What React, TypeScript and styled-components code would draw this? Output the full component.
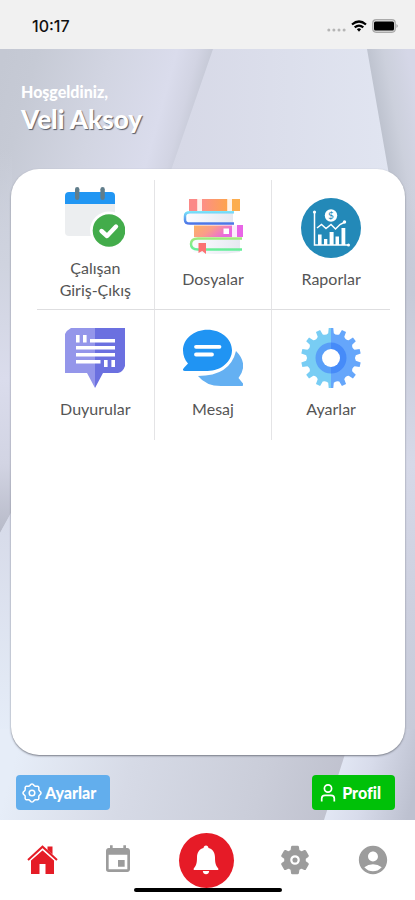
import React from "react";
import styled, { createGlobalStyle } from "styled-components";
import { MdAccountCircle, MdEvent } from "react-icons/md";

const GlobalStyle = createGlobalStyle`
  *, *::before, *::after { box-sizing: border-box; }
  body { margin: 0; font-family: Lato, "Open Sans", sans-serif; }
  button { font-family: inherit; border: 0; padding: 0; cursor: pointer; }
  svg { display: block; }
`;

const Screen = styled.div`
  display: flex;
  flex-direction: column;
  min-height: 100vh;
  background: #fff;
`;

const StatusBar = styled.header`
  display: flex;
  align-items: center;
  justify-content: space-between;
  height: 49px;
  padding: 2px 17px 0 32px;
  background: #f1f1f1;
`;

const Clock = styled.time`
  font: 500 16px/20px Inter, sans-serif;
  color: #111;
`;

const StatusIcons = styled.div`
  display: flex;
  align-items: center;
  gap: 5px;
`;

const Main = styled.main`
  position: relative;
  isolation: isolate;
  flex: 1;
  display: flex;
  flex-direction: column;
  padding: 32px 10px 10px 11px;
`;

const Backdrop = styled.svg`
  position: absolute;
  inset: 0;
  z-index: -1;
  width: 100%;
  height: 100%;
`;

const Greeting = styled.div`
  padding: 0 10px;
  margin-bottom: 34px;
  color: #fff;
`;

const Welcome = styled.p`
  margin: 0;
  font-size: 16px;
  line-height: 22px;
  font-weight: 900;
`;

const UserName = styled.h1`
  margin: 0;
  font-size: 26px;
  line-height: 32px;
  font-weight: 900;
  text-shadow: 1px 1px 1px #555a66;
`;

const Card = styled.section`
  flex: 1;
  padding: 11px 15px 24px 26px;
  background: #fff;
  border-radius: 28px;
  box-shadow: 0 1px 2px #777b86;
`;

const MenuGrid = styled.div`
  display: grid;
  grid-template-columns: repeat(3, 1fr);
  grid-auto-rows: 130px;
`;

const MenuItem = styled.button<{ $right?: boolean; $bottom?: boolean }>`
  display: flex;
  flex-direction: column;
  align-items: center;
  justify-content: center;
  gap: 10px;
  padding-bottom: 2px;
  background: none;
  border-right: ${(p) => (p.$right ? "1px solid #e4e4e6" : "0")};
  border-bottom: ${(p) => (p.$bottom ? "1px solid #dedee0" : "0")};
  color: #555;
  font-size: 16px;
  line-height: 22px;
`;

const MenuLabel = styled.span`
  max-width: 88px;
`;

const Actions = styled.div`
  display: flex;
  justify-content: space-between;
  margin-top: 20px;
  padding: 0 10px 0 5px;
`;

const ActionButton = styled.button<{ $color: string; $gap: number }>`
  display: flex;
  align-items: center;
  gap: ${(p) => p.$gap}px;
  height: 35px;
  padding: 0 14px 0 6px;
  border-radius: 4px;
  background: ${(p) => p.$color};
  color: #fff;
  font-size: 16px;
  line-height: 20px;
  font-weight: 900;
`;

const TabBar = styled.nav`
  position: relative;
  display: flex;
  align-items: center;
  justify-content: space-between;
  height: 80px;
  padding: 0 25px 0 27px;
  background: #fff;
`;

const TabButton = styled.button<{ $active?: boolean }>`
  display: flex;
  background: none;
  color: ${(p) => (p.$active ? "#e51c26" : "#9c9c9c")};
`;

const BellButton = styled.button`
  display: flex;
  align-items: center;
  justify-content: center;
  width: 55px;
  height: 55px;
  border-radius: 50%;
  background: #e61b27;
  color: #fff;
`;

const HomeIndicator = styled.div`
  position: absolute;
  left: 50%;
  bottom: 8px;
  width: 148px;
  height: 4px;
  border-radius: 2px;
  background: #000;
  transform: translateX(-50%);
`;

function polar(c: number, r: number, degrees: number) {
  const a = (degrees * Math.PI) / 180;
  return `${(c + r * Math.sin(a)).toFixed(2)} ${(c - r * Math.cos(a)).toFixed(2)}`;
}

function gearPath(c: number, outer: number, root: number, teeth: number) {
  const step = 360 / teeth;
  let d = "";
  for (let i = 0; i < teeth; i++) {
    const a = i * step;
    d += `${i ? "L" : "M"}${polar(c, root, a - step * 0.25)}L${polar(c, outer, a - step * 0.17)}`;
    d += `L${polar(c, outer, a + step * 0.17)}L${polar(c, root, a + step * 0.25)}`;
    d += `Q${polar(c, root - 2, a + step * 0.5)} ${polar(c, root, a + step * 0.75)}`;
  }
  return d + "Z";
}

function scallopPath(c: number, outer: number, inner: number, lobes: number) {
  const points = 96;
  let d = "";
  for (let i = 0; i < points; i++) {
    const a = (i * 360) / points;
    const wave = (1 + Math.cos((a * lobes * Math.PI) / 180)) / 2;
    d += `${i ? "L" : "M"}${polar(c, inner + (outer - inner) * wave, a)}`;
  }
  return d + "Z";
}

const BackdropArt = () => (
  <Backdrop viewBox="0 0 415 771" preserveAspectRatio="none" aria-hidden="true">
    <defs>
      <linearGradient id="leftPanel" gradientUnits="userSpaceOnUse" x1="0" y1="20" x2="200" y2="75">
        <stop offset="0" stopColor="#c4c8d3" />
        <stop offset="0.15" stopColor="#c6cad5" />
        <stop offset="0.5" stopColor="#d2d5e2" />
        <stop offset="0.8" stopColor="#dadcec" />
        <stop offset="0.9" stopColor="#d2d4e3" />
        <stop offset="1" stopColor="#c0c4d0" />
      </linearGradient>
      <linearGradient id="middlePanel" gradientUnits="userSpaceOnUse" x1="168" y1="0" x2="392" y2="0">
        <stop offset="0" stopColor="#d6d8e6" />
        <stop offset="1" stopColor="#e1e5f1" />
      </linearGradient>
      <linearGradient id="rightPanel" gradientUnits="userSpaceOnUse" x1="373" y1="50" x2="415" y2="42">
        <stop offset="0" stopColor="#bcc1cd" />
        <stop offset="0.45" stopColor="#ccd0dc" />
        <stop offset="1" stopColor="#d5d7e7" />
      </linearGradient>
      <linearGradient id="leftFade" x1="0" y1="0" x2="0" y2="1">
        <stop offset="0" stopColor="#cfd3df" stopOpacity="0" />
        <stop offset="0.3" stopColor="#cfd3df" />
        <stop offset="0.6" stopColor="#dadcec" />
        <stop offset="0.82" stopColor="#d2d4e3" />
        <stop offset="1" stopColor="#b7bac8" />
      </linearGradient>
      <linearGradient id="lowerLeft" x1="0" y1="0" x2="0" y2="1">
        <stop offset="0" stopColor="#d4d7e6" />
        <stop offset="1" stopColor="#e6eef9" />
      </linearGradient>
      <linearGradient id="floor" gradientUnits="userSpaceOnUse" x1="20" y1="690" x2="335" y2="775">
        <stop offset="0" stopColor="#e6edf8" />
        <stop offset="0.35" stopColor="#d6dae6" />
        <stop offset="0.75" stopColor="#cacdd9" />
        <stop offset="1" stopColor="#bfc1ce" />
      </linearGradient>
      <linearGradient id="floorRight" gradientUnits="userSpaceOnUse" x1="335" y1="720" x2="415" y2="740">
        <stop offset="0" stopColor="#e3e8f5" />
        <stop offset="0.4" stopColor="#d8dceb" />
        <stop offset="1" stopColor="#bdc1d0" />
      </linearGradient>
      <linearGradient id="rightFade" x1="0" y1="0" x2="0" y2="1">
        <stop offset="0" stopColor="#d0d3e2" stopOpacity="0" />
        <stop offset="0.2" stopColor="#c6cad8" />
        <stop offset="0.5" stopColor="#d6d9e8" />
        <stop offset="0.75" stopColor="#cdd0df" />
        <stop offset="1" stopColor="#c6cad8" />
      </linearGradient>
    </defs>
    <rect width="415" height="771" fill="url(#middlePanel)" />
    <path d="M0 0H213L168 130L60 450H0Z" fill="url(#leftPanel)" />
    <path d="M367 0H415V700H395V160Z" fill="url(#rightPanel)" />
    <path d="M0 100H12V462L0 484Z" fill="url(#leftFade)" />
    <path d="M0 484L30 430V700H0Z" fill="url(#lowerLeft)" />
    <path d="M395 130H415V700H395Z" fill="url(#rightFade)" />
    <path d="M0 680H355L325 771H0Z" fill="url(#floor)" />
    <path d="M353 680H415V771H324Z" fill="url(#floorRight)" />
  </Backdrop>
);

const SignalIcons = () => (
  <StatusIcons aria-hidden="true">
    <svg width="19" height="16" viewBox="0 0 19 16" fill="#b5b5b5">
      <circle cx="1.8" cy="12" r="1.5" />
      <circle cx="6.9" cy="12" r="1.5" />
      <circle cx="12" cy="12" r="1.5" />
      <circle cx="17.1" cy="12" r="1.5" />
    </svg>
    <svg width="16" height="12" viewBox="0 0 16 12" fill="none" stroke="#000" strokeWidth="2.2">
      <path d="M1 4.5Q8-1.5 15 4.5" />
      <path d="M3.7 7.4Q8 3.7 12.3 7.4" />
      <path d="M5.9 9.2Q8 7.5 10.1 9.2L8 11.7Z" fill="#000" stroke="none" />
    </svg>
    <svg width="26" height="14" viewBox="0 0 26 14">
      <rect x="0.7" y="0.7" width="22.6" height="12.6" rx="3.5" fill="#ddd" stroke="#aaa" strokeWidth="1.2" />
      <rect x="2" y="2.5" width="20" height="9" rx="1.5" fill="#000" />
      <path d="M24.5 5Q27 7 24.5 9Z" fill="#999" />
    </svg>
  </StatusIcons>
);

const CalendarIcon = () => (
  <svg width="60" height="60" viewBox="0 0 60 60" aria-hidden="true">
    <path d="M0 16H50V45Q50 49 46 49H4Q0 49 0 45Z" fill="#eceef0" />
    <path d="M0 17V9Q0 5 4 5H46Q50 5 50 9V17Z" fill="#2196f3" />
    <rect x="10" y="0" width="4.4" height="13" rx="2.2" fill="#607d8b" />
    <rect x="35.4" y="0" width="4.4" height="13" rx="2.2" fill="#607d8b" />
    <circle cx="44" cy="43.5" r="19" fill="#fff" />
    <circle cx="44" cy="43.5" r="16.3" fill="#43ac4b" />
    <path d="M36.5 44L42 49L51 39.5" fill="none" stroke="#fff" strokeWidth="4.4" strokeLinecap="round" strokeLinejoin="round" />
  </svg>
);

const BooksIcon = () => (
  <svg width="60" height="60" viewBox="0 0 60 60" aria-hidden="true">
    <defs>
      <linearGradient id="spine"><stop stopColor="#fc8f88" /><stop offset="1" stopColor="#fda34d" /></linearGradient>
      <linearGradient id="spineLow" x2="1" y2="0.4"><stop stopColor="#fcb265" /><stop offset="0.5" stopColor="#fa9c8a" /><stop offset="1" stopColor="#e968df" /></linearGradient>
      <linearGradient id="blueCover" gradientUnits="userSpaceOnUse" x1="30" y1="13" x2="30" y2="27"><stop stopColor="#7ce8fb" /><stop offset="1" stopColor="#4869e4" /></linearGradient>
      <linearGradient id="greenCover" gradientUnits="userSpaceOnUse" x1="30" y1="39" x2="30" y2="53"><stop stopColor="#a8e878" /><stop offset="1" stopColor="#60ef9c" /></linearGradient>
      <linearGradient id="pages"><stop stopColor="#fafbff" /><stop offset="1" stopColor="#e6e9f1" /></linearGradient>
    </defs>
    <rect x="6" y="1" width="8.5" height="12" fill="#fb8987" />
    <rect x="14.5" y="1" width="4.5" height="12" fill="#fff0ea" />
    <rect x="19" y="1" width="25.5" height="12" fill="url(#spine)" />
    <rect x="44.5" y="1" width="4.5" height="12" fill="#fff2e7" />
    <rect x="49" y="1" width="8" height="12" fill="#fcad4e" />
    <path d="M5 15H50V25H5Z" fill="url(#pages)" />
    <path d="M51 14.2H7Q2 14.2 2 18V22Q2 25.6 7 25.6H51" fill="none" stroke="url(#blueCover)" strokeWidth="2.5" />
    <rect x="11" y="27.5" width="38" height="11.5" fill="url(#spineLow)" />
    <rect x="40.5" y="30.5" width="5.5" height="5.5" fill="#fff" />
    <rect x="49" y="27.5" width="5" height="11.5" fill="#fcecfc" />
    <rect x="54" y="27" width="6" height="12" fill="#e866e6" />
    <path d="M10 41H57V54Q30 58 10 54Z" fill="url(#pages)" />
    <path d="M59 40.5H15Q8 40.5 8 46Q8 51.5 15 51.5H59" fill="none" stroke="url(#greenCover)" strokeWidth="2.5" />
    <path d="M15.5 45H23V56L19.2 53L15.5 55Z" fill="#fb7272" />
  </svg>
);

const ReportsIcon = () => (
  <svg width="60" height="60" viewBox="0 0 60 60" aria-hidden="true">
    <circle cx="30" cy="30" r="30" fill="#2389b8" />
    <g fill="none" stroke="#fff" strokeWidth="1.5">
      <path d="M13.5 14V47H47" />
      <path d="M16 30L20.5 26.5L25 30.5L30 26.5L34.5 31L39 26.5L43 24.5" />
    </g>
    <g fill="#fff">
      <circle cx="13.5" cy="14" r="1.6" />
      <circle cx="47.5" cy="47" r="1.5" />
      <circle cx="43.5" cy="24" r="1.7" />
      <circle cx="30" cy="17.5" r="6.2" />
      <path d="M17 36.5h3.6V47H17ZM23 41h3.3v6H23ZM28.6 34h4V47h-4ZM34.5 38.5H38V47h-3.5ZM40.5 30h3.8V47h-3.8Z" />
    </g>
    <text x="30" y="21" textAnchor="middle" fontSize="10" fontFamily="Lato, sans-serif" fill="#2389b8">$</text>
  </svg>
);

const AnnouncementIcon = () => (
  <svg width="60" height="60" viewBox="0 0 60 60" aria-hidden="true">
    <path d="M6 0H30V60L22 45H0V6Q2 2 6 0Z" fill="#9496ea" />
    <path d="M30 0H60V38Q58 44 53 45H38L30 60Z" fill="#6b70e0" />
    <path
      d="M11 7h3.6v7.5H11ZM18 7h3.6v7.5H18ZM25 11h25v3.4H25ZM11 18h39v3.4H11ZM11 25h39v3.4H11ZM11 32h24.5v3.4H11ZM39 32h3.6v7H39ZM46.4 32H50v7h-3.6Z"
      fill="#fff"
    />
  </svg>
);

const MessageIcon = () => (
  <svg width="60" height="60" viewBox="0 0 60 60" aria-hidden="true">
    <path d="M15 48Q47 48 53 23Q66 36 55.5 50L60 55.5Q61 58 58 58H38Q23 58 15 48Z" fill="#64b0f2" />
    <path d="M24.5 1.8C38 1.8 49 11 49 22.3S38 43 24.5 43H2Q-1.5 42.6 1 39.7L5 35.5C1.8 32 0 27.5 0 22.3C0 11 11 1.8 24.5 1.8Z" fill="#2094f3" />
    <path d="M13 18.8H36.5M13 26.5H29" stroke="#fff" strokeWidth="3.8" strokeLinecap="round" />
  </svg>
);

const cogOutline = gearPath(30, 30, 25, 14);

const CogIcon = () => (
  <svg width="60" height="60" viewBox="0 0 60 60" aria-hidden="true">
    <defs>
      <linearGradient id="cog" gradientUnits="userSpaceOnUse" x1="0" y1="0" x2="60" y2="0">
        <stop offset="0.5" stopColor="#78cdf4" />
        <stop offset="0.5" stopColor="#65a6fb" />
      </linearGradient>
    </defs>
    <path d={cogOutline} fill="url(#cog)" />
    <path d="M30 14.5A15.5 15.5 0 0 0 30 45.5Z" fill="#599ff8" />
    <path d="M30 14.5A15.5 15.5 0 0 1 30 45.5Z" fill="#468bf9" />
    <circle cx="30" cy="30" r="9" fill="#fff" />
  </svg>
);

const cogLine = scallopPath(10, 9, 7.5, 8);

const SmallCogIcon = () => (
  <svg width="20" height="20" viewBox="0 0 20 20" fill="none" stroke="#fff" strokeWidth="1.5" aria-hidden="true">
    <path d={cogLine} strokeLinejoin="round" />
    <circle cx="10" cy="10" r="2.8" />
  </svg>
);

const PersonIcon = () => (
  <svg width="20" height="20" viewBox="0 0 20 20" fill="none" stroke="#fff" strokeWidth="1.7" aria-hidden="true">
    <circle cx="10" cy="5.5" r="3.6" />
    <path d="M3.7 18.5V15.5Q3.7 12.4 7 12.4H13Q16.3 12.4 16.3 15.5V18.5" />
  </svg>
);

const HouseIcon = () => (
  <svg width="31" height="30" viewBox="0 0 31 30" fill="currentColor" aria-hidden="true">
    <path d="M15.5 4.5L27 15V29H18.5V19H12.5V29H4V15Z" />
    <path d="M1 15.5L15.5 2.7L30 15.5" fill="none" stroke="#fff" strokeWidth="4" />
    <path d="M1 15L15.5 1.7L30 15" fill="none" stroke="currentColor" strokeWidth="2" />
    <path d="M20.5 1.5H25.5V9.5L20.5 5Z" />
  </svg>
);

const BellIcon = () => (
  <svg width="26" height="30" viewBox="0 0 26 30" fill="currentColor" aria-hidden="true">
    <path d="M13 0.5C14.5 0.5 15.3 1.5 15.5 3C20 4.2 22 8 22 12.5C22 19 23 20.5 25.3 23.5V25H0.7V23.5C3 20.5 4 19 4 12.5C4 8 6 4.2 10.5 3C10.7 1.5 11.5 0.5 13 0.5Z" />
    <path d="M9.8 26H16.2Q15.7 29.2 13 29.2Q10.3 29.2 9.8 26Z" />
  </svg>
);

const GearTabIcon = () => (
  <svg width="34" height="34" viewBox="0 0 24 24" aria-hidden="true">
    <path
      fill="currentColor"
      stroke="currentColor"
      strokeWidth="0.8"
      d="M19.14 12.94c.04-.3.06-.61.06-.94 0-.32-.02-.64-.07-.94l2.03-1.58c.18-.14.23-.41.12-.61l-1.92-3.32c-.12-.22-.37-.29-.59-.22l-2.39.96c-.5-.38-1.03-.7-1.62-.94l-.36-2.54c-.04-.24-.24-.41-.48-.41h-3.84c-.24 0-.43.17-.47.41l-.36 2.54c-.59.24-1.13.57-1.62.94l-2.39-.96c-.22-.08-.47 0-.59.22L2.74 8.87c-.12.21-.08.47.12.61l2.03 1.58c-.05.3-.09.63-.09.94s.02.64.07.94l-2.03 1.58c-.18.14-.23.41-.12.61l1.92 3.32c.12.22.37.29.59.22l2.39-.96c.5.38 1.03.7 1.62.94l.36 2.54c.05.24.24.41.48.41h3.84c.24 0 .44-.17.47-.41l.36-2.54c.59-.24 1.13-.56 1.62-.94l2.39.96c.22.08.47 0 .59-.22l1.92-3.32c.12-.22.07-.47-.12-.61l-2.01-1.58z"
    />
    <circle cx="12" cy="12" r="2.6" fill="none" stroke="#fff" strokeWidth="1.6" />
  </svg>
);

const menu = [
  { label: "Çalışan Giriş-Çıkış", Icon: CalendarIcon },
  { label: "Dosyalar", Icon: BooksIcon },
  { label: "Raporlar", Icon: ReportsIcon },
  { label: "Duyurular", Icon: AnnouncementIcon },
  { label: "Mesaj", Icon: MessageIcon },
  { label: "Ayarlar", Icon: CogIcon },
];

export default function App() {
  return (
    <Screen lang="tr">
      <GlobalStyle />
      <StatusBar>
        <Clock>10:17</Clock>
        <SignalIcons />
      </StatusBar>
      <Main>
        <BackdropArt />
        <Greeting>
          <Welcome>Hoşgeldiniz,</Welcome>
          <UserName>Veli Aksoy</UserName>
        </Greeting>
        <Card>
          <MenuGrid>
            {menu.map(({ label, Icon }, i) => (
              <MenuItem key={label} type="button" $right={i % 3 < 2} $bottom={i < 3}>
                <Icon />
                <MenuLabel>{label}</MenuLabel>
              </MenuItem>
            ))}
          </MenuGrid>
        </Card>
        <Actions>
          <ActionButton type="button" $color="#62aeed" $gap={3}>
            <SmallCogIcon />
            Ayarlar
          </ActionButton>
          <ActionButton type="button" $color="#00c108" $gap={4}>
            <PersonIcon />
            Profil
          </ActionButton>
        </Actions>
      </Main>
      <TabBar>
        <TabButton type="button" $active aria-label="Ana sayfa"><HouseIcon /></TabButton>
        <TabButton type="button" aria-label="Takvim"><MdEvent size={32} /></TabButton>
        <BellButton type="button" aria-label="Bildirimler"><BellIcon /></BellButton>
        <TabButton type="button" aria-label="Ayarlar"><GearTabIcon /></TabButton>
        <TabButton type="button" aria-label="Profil"><MdAccountCircle size={34} /></TabButton>
        <HomeIndicator />
      </TabBar>
    </Screen>
  );
}
